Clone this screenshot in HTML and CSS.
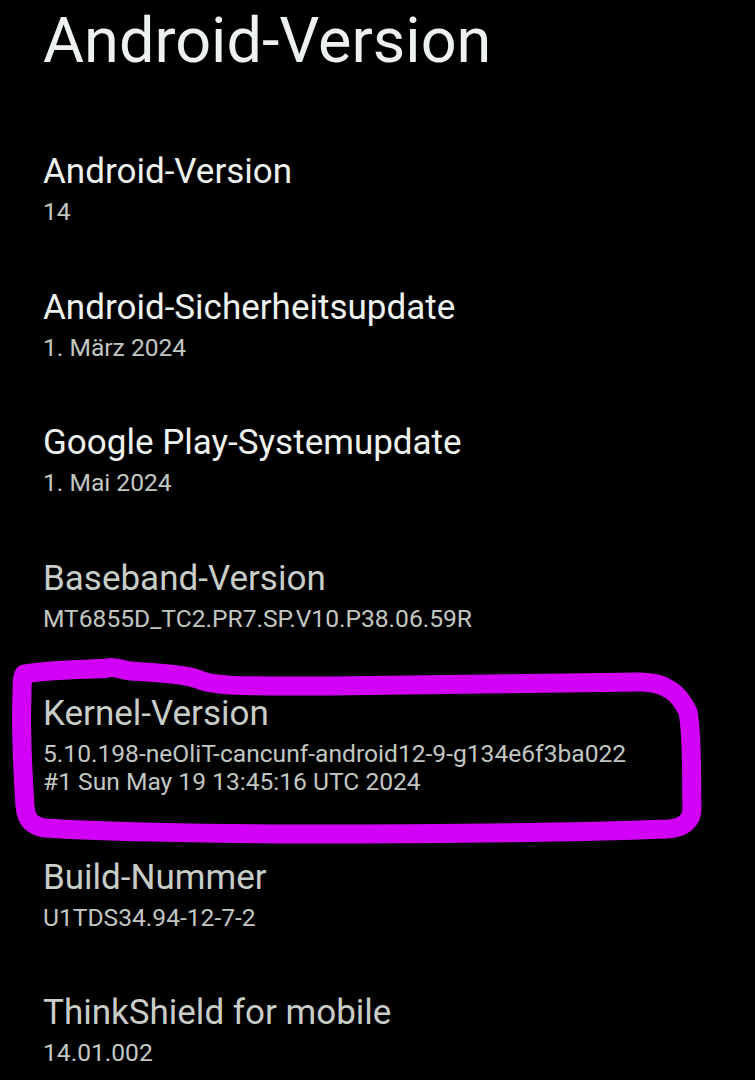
FILE: index.html
```html
<!DOCTYPE html>
<html lang="de">
<head>
<meta charset="utf-8">
<title>Android-Version</title>
<link rel="stylesheet" href="styles.css">
</head>
<body>
<main class="screen">
  <h1 class="page-title">Android-Version</h1>
  <ul class="prefs">
    <li class="pref">
      <div class="pref-title">Android-Version</div>
      <div class="pref-summary">14</div>
    </li>
    <li class="pref">
      <div class="pref-title">Android-Sicherheitsupdate</div>
      <div class="pref-summary">1. März 2024</div>
    </li>
    <li class="pref">
      <div class="pref-title">Google Play-Systemupdate</div>
      <div class="pref-summary">1. Mai 2024</div>
    </li>
    <li class="pref pref-static">
      <div class="pref-title">Baseband-Version</div>
      <div class="pref-summary">MT6855D_TC2.PR7.SP.V10.P38.06.59R</div>
    </li>
    <li class="pref pref-static">
      <div class="pref-title">Kernel-Version</div>
      <div class="pref-summary">5.10.198-neOliT-cancunf-android12-9-g134e6f3ba022<br>#1 Sun May 19 13:45:16 UTC 2024</div>
    </li>
    <li class="pref pref-static">
      <div class="pref-title">Build-Nummer</div>
      <div class="pref-summary">U1TDS34.94-12-7-2</div>
    </li>
    <li class="pref pref-static">
      <div class="pref-title">ThinkShield for mobile</div>
      <div class="pref-summary">14.01.002</div>
    </li>
  </ul>
  <svg class="scribble" width="755" height="1080" viewBox="0 0 755 1080" aria-hidden="true">
    <path d="M24 674 C60 668 95 670 108 668 C114 666 118 669 130 671 C160 673 185 674 200 680 C215 687 260 686 330 686 C430 685 540 683 640 682 C668 682 680 695 688 712 C693 740 691 780 692 808 C692 822 682 828 668 829 C560 833 420 834 300 834 C200 834 90 831 45 828 C30 826 26 818 25 806 C22 760 21 720 22 695 C22 684 22 678 24 674 Z"/>
  </svg>
</main>
</body>
</html>
```
FILE: styles.css
```css
html, body {
  margin: 0;
  padding: 0;
  background: #000;
}

body {
  font-family: Roboto, "Noto Sans", "Liberation Sans", sans-serif;
  color: #eef2ee;
}

.screen {
  position: relative;
  width: 755px;
  height: 1080px;
  overflow: hidden;
  background: #000;
}

.page-title {
  margin: 0;
  padding: 3px 0 42px 43px;
  font-size: 63px;
  font-weight: 400;
  line-height: 76px;
  color: #eef2ee;
}

.prefs {
  list-style: none;
  margin: 0;
  padding: 0;
}

.pref {
  padding: 30px 24px 30.5px 43px;
}

.pref-title {
  font-size: 35px;
  line-height: 42px;
  color: #eef2ee;
}

.pref-summary {
  margin-top: 5px;
  font-size: 24.6px;
  line-height: 28px;
  color: #c2c7c2;
}

.pref-static .pref-title {
  color: #c8cdc8;
}

.scribble {
  position: absolute;
  left: 0;
  top: 0;
  pointer-events: none;
}

.scribble path {
  fill: none;
  stroke: #d300f7;
  stroke-width: 19;
  stroke-linecap: round;
  stroke-linejoin: round;
}
```
